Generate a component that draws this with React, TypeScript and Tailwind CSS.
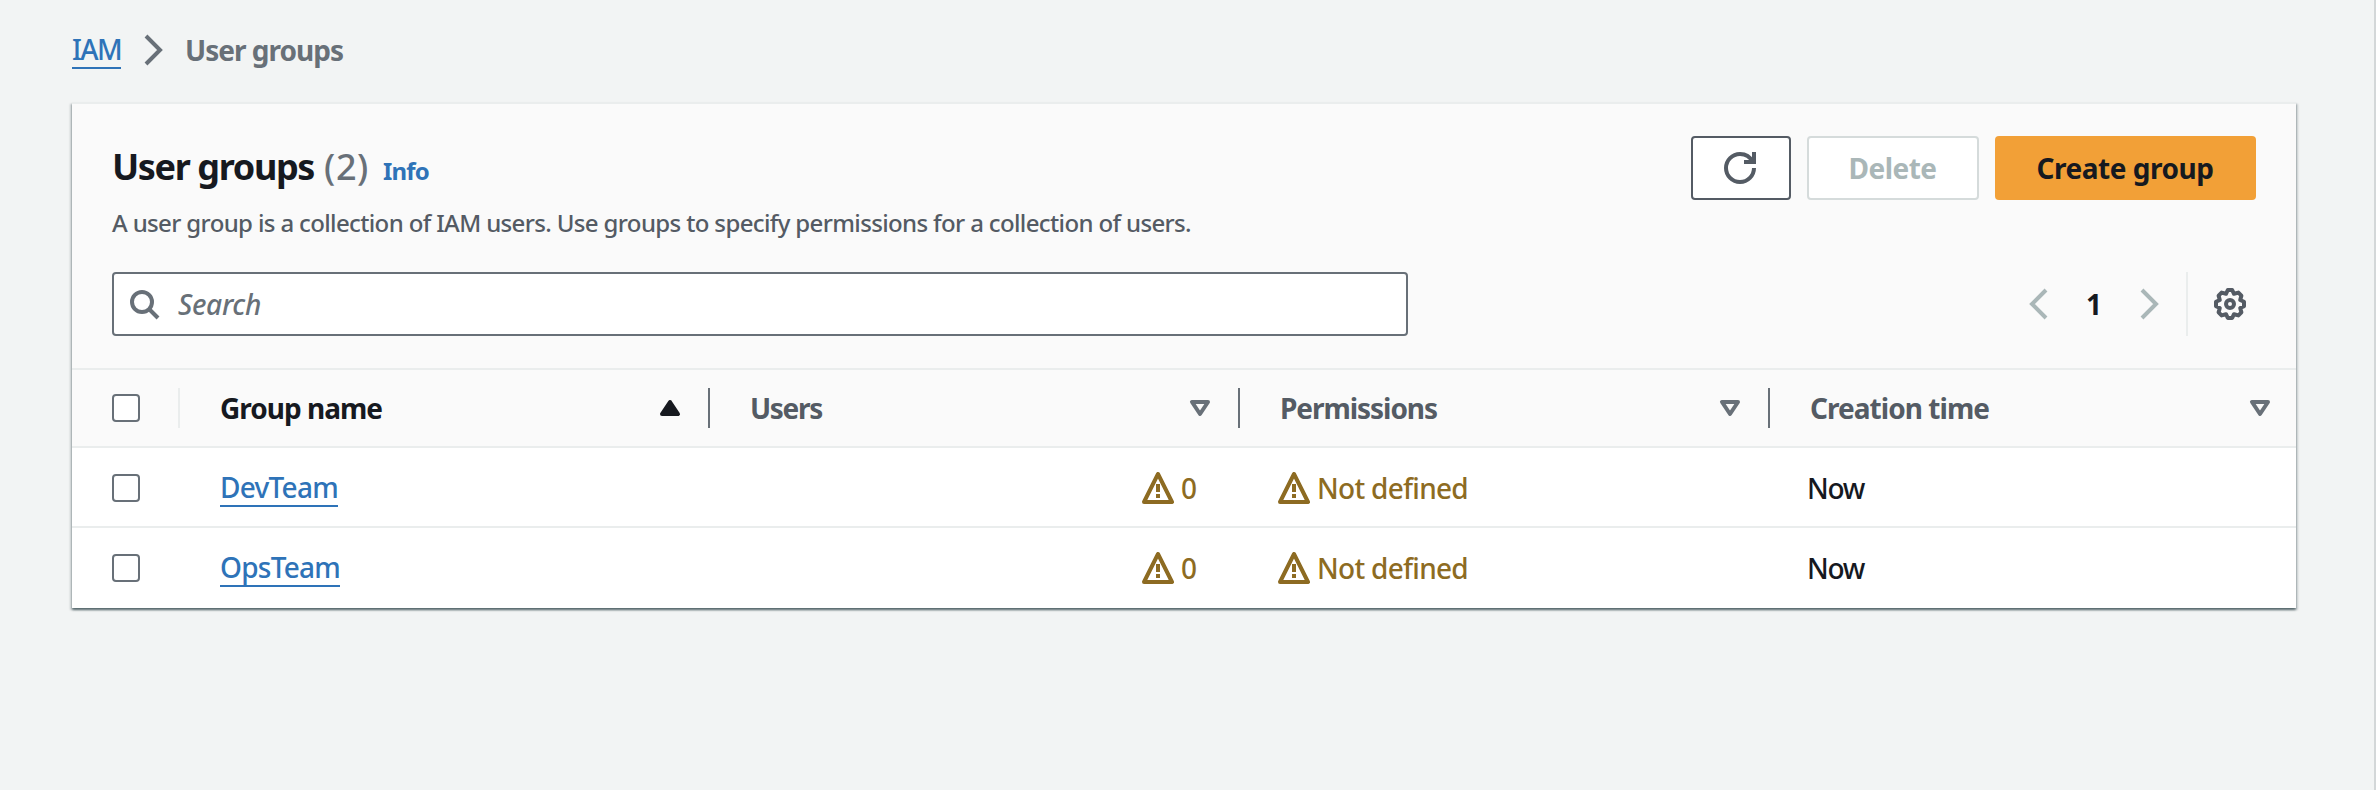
import React from "react";

const font = "font-['Noto_Sans','Open_Sans',sans-serif]";

/** A line of text fitted to a fixed advance width. */
function Fit({ w, size, className = "", children }: { w: number; size: number; className?: string; children: string }) {
  const ref = React.useRef<HTMLSpanElement>(null);
  const [spacing, setSpacing] = React.useState(0);
  React.useLayoutEffect(() => {
    const el = ref.current;
    if (!el) return;
    setSpacing((w - el.getBoundingClientRect().width) / children.length);
  }, []);
  return (
    <span
      ref={ref}
      className={`inline-block whitespace-nowrap ${className}`}
      style={{ fontSize: size, letterSpacing: spacing }}
    >
      {children}
    </span>
  );
}

function Warning() {
  return (
    <svg width="32" height="32" viewBox="0 0 16 16" fill="none" stroke="#8d6b22" strokeWidth="2" strokeLinejoin="round" className="shrink-0">
      <path d="M8 1l7 14H1L8 1z" />
      <path d="M8 6v4M8 11v2" />
    </svg>
  );
}

function Caret({ up = false }: { up?: boolean }) {
  return up ? (
    <svg width="32" height="32" viewBox="0 0 16 16" className="shrink-0" fill="#16191f" stroke="#16191f" strokeWidth="2" strokeLinejoin="round">
      <path d="M8 5l4 6H4z" />
    </svg>
  ) : (
    <svg width="32" height="32" viewBox="0 0 16 16" className="shrink-0" fill="none" stroke="#687078" strokeWidth="2" strokeLinejoin="round">
      <path d="M4 5h8l-4 6z" />
    </svg>
  );
}

function Check() {
  return <span className="ml-10 block h-7 w-7 rounded-[4px] border-2 border-[#687078] bg-white" />;
}

function Chevron({ color, left = false }: { color: string; left?: boolean }) {
  return (
    <svg width="32" height="32" viewBox="0 0 16 16" fill="none" stroke={color} strokeWidth="2" className="shrink-0">
      <path d={left ? "M11 1L4 8l7 7" : "M5 1l7 7-7 7"} />
    </svg>
  );
}

const grid = "grid grid-cols-[108px_530px_530px_530px_526px]";

export default function App() {
  return (
    <div className={`h-[790px] w-[2376px] border-r-2 border-[#d3d7d8] bg-[#f2f4f4] pt-[28px] pl-[72px] text-[28px] font-medium text-[#16191f] ${font}`}>
      <nav className="flex h-[44px] items-center">
        <a className="flex h-[38px] items-center border-b-2 border-[#2e73b8] text-[#2e73b8]">
          <Fit w={49} size={28}>IAM</Fit>
        </a>
        <span className="mr-[17px] ml-[15px] flex"><Chevron color="#687078" /></span>
        <Fit w={158} size={28} className="font-bold text-[#687078]">User groups</Fit>
      </nav>
      <main className="mt-[30px] h-[506px] w-[2224px] border-t-2 border-[#eaeded] bg-white shadow-[0_2px_2px_0_rgba(0,28,36,0.5),2px_2px_2px_0_rgba(0,28,36,0.15),-2px_2px_2px_0_rgba(0,28,36,0.15)]">
        <section className="h-[264px] bg-[#fafafa] px-10 pt-8">
          <div className="flex h-16 justify-between">
            <div className="flex items-baseline pt-[4px]">
              <Fit w={202} size={36} className="mr-[10px] font-bold">User groups</Fit>
              <Fit w={45} size={36} className="mr-[14px] text-[#687078]">(2)</Fit>
              <Fit w={46} size={24} className="font-bold text-[#2e73b8]">Info</Fit>
            </div>
            <div className="flex gap-4">
              <button className="flex w-[100px] items-center justify-center rounded-[4px] border-2 border-[#545b64] bg-white pr-[2px]">
                <svg width="32" height="32" viewBox="0 0 16 16" fill="none" stroke="#545b64" strokeWidth="2">
                  <path d="M15 8c0 3.870-3.130 7-7 7s-7-3.130-7-7 3.130-7 7-7c2.790 0 5.200 1.630 6.330 4" />
                  <path d="M10 5h5V0" />
                </svg>
              </button>
              <button className="flex w-[172px] items-center justify-center rounded-[4px] border-2 border-[#d5dbdb] bg-white pr-[1px] font-bold text-[#aab7b8]">
                <Fit w={88} size={28}>Delete</Fit>
              </button>
              <button className="flex w-[261px] items-center justify-center rounded-[4px] bg-[#f2a037] pr-[1px] font-bold">
                <Fit w={177} size={28}>Create group</Fit>
              </button>
            </div>
          </div>
          <div className="mt-[5px] flex h-[36px] items-center text-[#545b64]">
            <Fit w={1079} size={24}>A user group is a collection of IAM users. Use groups to specify permissions for a collection of users.</Fit>
          </div>
          <div className="mt-[31px] flex h-16 items-center justify-between">
            <div className="flex h-16 w-[1296px] items-center rounded-[4px] border-2 border-[#687078] bg-white pl-[14px] text-[#687078] italic">
              <svg width="32" height="32" viewBox="0 0 16 16" fill="none" stroke="#687078" strokeWidth="2" className="mr-[18px]">
                <circle cx="7" cy="7" r="5" />
                <path d="M10.500 10.500L15 15" />
              </svg>
              <Fit w={83} size={28}>Search</Fit>
            </div>
            <div className="flex h-16 items-center">
              <Chevron color="#aab7b8" left />
              <span className="flex w-[76px] justify-center text-[28px] font-bold">1</span>
              <Chevron color="#aab7b8" />
              <span className="ml-[22px] h-16 w-[2px] bg-[#eaeded]" />
              <svg width="32" height="32" viewBox="-8 -8 16 16" fill="none" stroke="#545b64" strokeWidth="2" strokeLinejoin="round" className="mr-[10px] ml-[26px]">
                <path d="M-1.100-7h2.200L2-5.100 4.200-5.700 5.700-4.200 5.100-2 7-1.100v2.200L5.100 2 5.700 4.200 4.200 5.700 2 5.100 1.100 7h-2.200L-2 5.100-4.200 5.700-5.700 4.200-5.100 2-7 1.100v-2.200L-5.100-2-5.700-4.200-4.200-5.700-2-5.100z" />
                <circle r="2" />
              </svg>
            </div>
          </div>
        </section>
        <div className={`${grid} h-[80px] items-center border-y-2 border-[#eaeded] bg-[#fafafa] font-bold text-[#545b64]`}>
          <div className="flex h-10 items-center border-r-2 border-[#eaeded]"><Check /></div>
          <div className="flex h-10 items-center justify-between border-r-2 border-[#687078] pr-[22px] pl-10 text-[#16191f]"><Fit w={162} size={28}>Group name</Fit><Caret up /></div>
          <div className="flex h-10 items-center justify-between border-r-2 border-[#687078] pr-[22px] pl-10"><Fit w={72} size={28}>Users</Fit><Caret /></div>
          <div className="flex h-10 items-center justify-between border-r-2 border-[#687078] pr-[22px] pl-10"><Fit w={157} size={28}>Permissions</Fit><Caret /></div>
          <div className="flex h-10 items-center justify-between pr-[20px] pl-10"><Fit w={179} size={28}>Creation time</Fit><Caret /></div>
        </div>
        {["DevTeam", "OpsTeam"].map((name, i) => (
          <div key={name} className={`${grid} h-[80px] items-center border-b-2 pt-[2px] ${i ? "border-white" : "border-[#eaeded]"}`}>
            <Check />
            <div className="flex pl-10">
              <a className="flex h-[38px] items-center border-b-2 border-[#2e73b8] text-[#2e73b8]">
                <Fit w={i ? 120 : 118} size={28}>{name}</Fit>
              </a>
            </div>
            <div className="flex items-center justify-end gap-[7px] pr-[42px] text-[#8d6b22]"><Warning /><Fit w={17} size={28}>0</Fit></div>
            <div className="flex items-center gap-[7px] pl-[38px] text-[#8d6b22]"><Warning /><Fit w={151} size={28}>Not defined</Fit></div>
            <div className="pl-[37px]"><Fit w={57} size={28}>Now</Fit></div>
          </div>
        ))}
      </main>
    </div>
  );
}
